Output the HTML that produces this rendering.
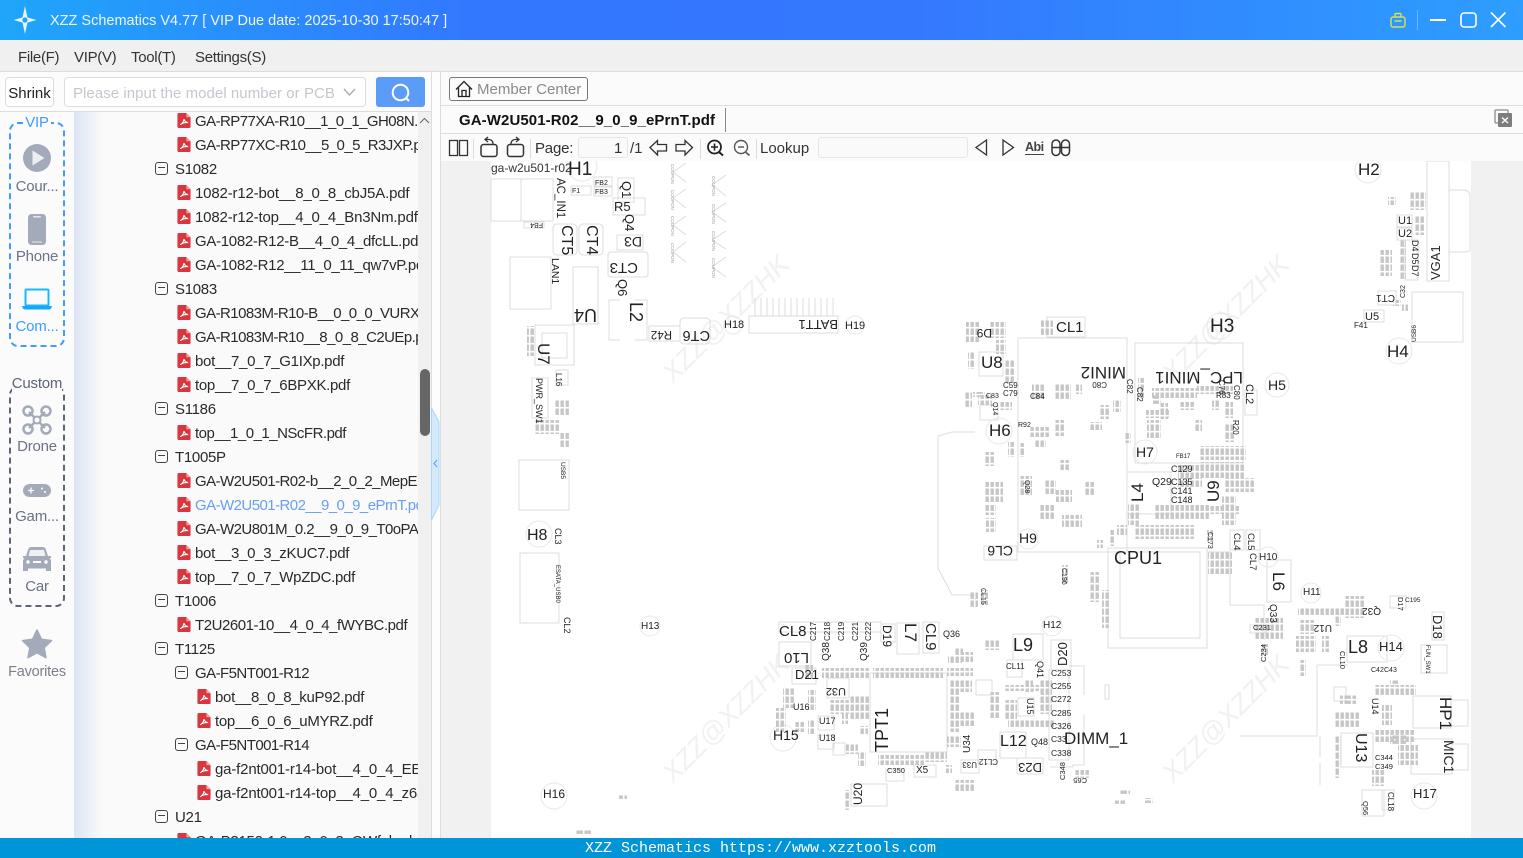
<!DOCTYPE html>
<html><head><meta charset="utf-8"><title>XZZ Schematics</title>
<style>
*{box-sizing:border-box}
html,body{margin:0;padding:0;width:1523px;height:858px;overflow:hidden;background:#f1f1f1;font-family:"Liberation Sans","Noto Sans CJK SC",sans-serif}
.a{position:absolute}
#title{left:0;top:0;width:1523px;height:40px;background:linear-gradient(90deg,#1fa6fa 0,#3376ff 32%,#3478fe 60%,#2d9eff 100%)}
#ttl{left:50px;top:13px;color:#eef5ff;font-size:14.5px;white-space:nowrap}
#menu{left:0;top:40px;width:1523px;height:32px;background:#f0f0f0;border-bottom:1px solid #dcdcdc}
.m{position:absolute;top:9px;font-size:15px;color:#333;white-space:nowrap;letter-spacing:-.3px}
#left{left:0;top:72px;width:431px;height:766px;background:#fafafa}
#srch{left:0;top:72px;width:431px;height:40px;background:#fcfcfc;border-bottom:1px solid #ddd}
.btn{position:absolute;border:1px solid #ddd;border-radius:4px;background:#fff}
#side{left:0;top:112px;width:74px;height:726px;background:#fbfbfb}
#grad{left:74px;top:112px;width:28px;height:726px;background:linear-gradient(90deg,#dce5f4,#fafafa)}
.lb{position:absolute;left:0;width:74px;text-align:center;font-size:15px;color:#6b7384;line-height:18px;margin-top:1px;letter-spacing:-.2px}
.box{position:absolute;left:9px;width:56px;border:2px dashed #3e9cff;border-radius:9px}
#tree{left:74px;top:112px;width:344px;height:726px;overflow:hidden}
.r{position:absolute;height:24px;line-height:24px;font-size:15px;color:#2a2a2a;white-space:nowrap;letter-spacing:-.3px;margin-top:2px}
.c{letter-spacing:-.55px}
.l{letter-spacing:-.17px}
.mn{position:absolute;width:13px;height:13px;border:1.3px solid #444;border-radius:3px}
.mn:after{content:"";position:absolute;left:2px;right:2px;top:4.2px;height:1.3px;background:#444}
#track{left:418px;top:112px;width:13px;height:726px;background:#f0f0f0}
#thumb{left:420px;top:369px;width:9.5px;height:67px;background:#666;border-radius:5px}
#gut{left:431px;top:72px;width:10px;height:766px;background:#fdfdfd;border-left:1px solid #ddd;border-right:1px solid #ddd}
#rt{left:441px;top:72px;width:1082px;height:89px;background:#fbfbfb}
.hl{position:absolute;left:441px;width:1082px;height:1px;background:#ddd}
#mc{left:449px;top:77px;width:139px;height:24px;border:1px solid #777;border-radius:3px;background:#fbfbfb}
.t{position:absolute;font-size:15px;color:#333;white-space:nowrap}
.inp{position:absolute;border:1px solid #e6e6e6;border-radius:3px;background:#fafafa}
.dv{position:absolute;top:139px;width:1px;height:20px;background:#ddd}
#foot{left:0;top:838px;width:1523px;height:20px;background:#0094d9;color:#fff;font-family:"Liberation Mono",monospace;font-size:15px;line-height:22px;padding-left:585px;white-space:nowrap;overflow:hidden}
svg{position:absolute;left:0;top:0;overflow:visible}
#sch text{font-family:"Liberation Sans",sans-serif;fill:#222}
#sch .o{fill:none;stroke:#dcdcdc;stroke-width:1}
#sch .h{fill:none;stroke:#e8e8e8;stroke-width:1}
#sch text.w{fill:#f1f1f1}
#sch text.g{fill:#999;font-size:4.5px}
</style></head><body>

<svg id="sch" width="1523" height="858" viewBox="0 0 1523 858">
<defs>
<pattern id="p" width="5" height="8" patternUnits="userSpaceOnUse"><rect x=".5" y=".5" width="3.4" height="6.4" fill="#c6c6c6"/></pattern>
<pattern id="q" width="8" height="5" patternUnits="userSpaceOnUse"><rect x=".5" y=".5" width="6.4" height="3.4" fill="#c6c6c6"/></pattern>
<filter id="b" x="0" y="0" width="100%" height="100%"><feGaussianBlur stdDeviation=".35"/></filter>
</defs>
<rect x="491" y="161" width="980" height="677" fill="#fff"/>
<!-- watermarks -->
<g font-size="27" font-style="italic">
<text class="w" x="673" y="384" transform="rotate(-45 673 384)">XZZ@XZZHK</text>
<text class="w" x="1173" y="384" transform="rotate(-45 1173 384)">XZZ@XZZHK</text>
<text class="w" x="673" y="784" transform="rotate(-45 673 784)">XZZ@XZZHK</text>
<text class="w" x="1173" y="784" transform="rotate(-45 1173 784)">XZZ@XZZHK</text>
</g>
<!-- outlines -->
<g class="o">
<rect x="491" y="179" width="30" height="42"/><rect x="521" y="179" width="32" height="42"/>
<rect x="553" y="224" width="24" height="31" rx="4"/><rect x="579" y="224" width="24" height="31" rx="4"/>
<rect x="510" y="257" width="41" height="52"/><rect x="573" y="267" width="25" height="57"/>
<path d="M620 300H609V340H620M635 300H647V340H635"/><rect x="608" y="252" width="40" height="25" rx="3"/>
<rect x="680" y="318" width="30" height="26" rx="4"/><rect x="649" y="326" width="31" height="15"/>
<rect x="749" y="316" width="89" height="17"/>
<path d="M755 316V298M761 316V298M767 316V298M773 316V298M779 316V298M785 316V298M791 316V298M797 316V298M803 316V298M809 316V298M815 316V298M821 316V298M827 316V298M833 316V298"/>
<rect x="535" y="325" width="39" height="40"/><rect x="542" y="333" width="25" height="25"/>
<rect x="532" y="378" width="16" height="40"/><rect x="556" y="370" width="12" height="15"/>
<rect x="519" y="460" width="50" height="50"/><rect x="520" y="553" width="39" height="70"/>
<rect x="618" y="178" width="16" height="24"/><rect x="613" y="198" width="32" height="17"/><rect x="617" y="235" width="26" height="15"/>
<rect x="571" y="186" width="20" height="9"/><rect x="594" y="177" width="18" height="9"/><rect x="594" y="187" width="18" height="9"/><rect x="524" y="222" width="20" height="6"/>
<path d="M686 163L673 172L686 182M686 189L673 198L686 208M686 216L673 225L686 235M686 242L673 252L686 262M726 175L712 185L726 196M726 203L712 212L726 222M726 231L712 240L726 249M726 257L712 267L726 277"/>
<rect x="1018" y="338" width="109" height="214"/><rect x="1135" y="343" width="108" height="120"/>
<rect x="1108" y="548" width="99" height="100"/><rect x="1120" y="552" width="80" height="86"/>
<rect x="1047" y="317" width="38" height="20"/><rect x="1127" y="472" width="44" height="42"/>
<rect x="979" y="352" width="24" height="24"/><rect x="980" y="405" width="18" height="15"/>
<path d="M975 432H952L938 436V568L952 595H975"/><path d="M1207 552H1230V605M1230 605H1264V640"/>
<rect x="984" y="546" width="33" height="14"/><rect x="1245" y="390" width="12" height="25"/><rect x="1230" y="530" width="14" height="20"/><rect x="1246" y="530" width="14" height="20"/>
<rect x="1427" y="161" width="22" height="120"/><path d="M1449 190H1462Q1470 190 1470 196V250Q1470 252 1462 252H1449"/>
<rect x="1412" y="292" width="51" height="50"/><rect x="1378" y="291" width="18" height="14"/><rect x="1364" y="310" width="20" height="12"/>
<rect x="1397" y="215" width="15" height="12"/><rect x="1397" y="228" width="15" height="12"/><rect x="1405" y="240" width="13" height="40"/>
<!-- lower left -->
<rect x="779" y="622" width="32" height="10"/><rect x="779" y="642" width="32" height="24"/><rect x="792" y="668" width="24" height="16"/>
<rect x="811" y="622" width="70" height="10"/><rect x="881" y="624" width="14" height="18"/><rect x="897" y="623" width="22" height="31"/><rect x="923" y="622" width="16" height="31"/>
<rect x="827" y="678" width="22" height="20"/><rect x="870" y="673" width="77" height="79"/>
<rect x="818" y="716" width="16" height="14"/><rect x="818" y="735" width="16" height="14"/><rect x="833" y="743" width="12" height="12"/>
<rect x="851" y="784" width="36" height="22"/><rect x="886" y="769" width="18" height="12"/><rect x="914" y="765" width="22" height="12"/>
<rect x="1013" y="634" width="30" height="26"/><rect x="1007" y="660" width="15" height="17"/><rect x="1051" y="640" width="20" height="30"/>
<rect x="1000" y="732" width="26" height="26"/><rect x="1017" y="758" width="26" height="16"/><rect x="978" y="750" width="18" height="14"/><rect x="961" y="760" width="18" height="13"/>
<rect x="1049" y="670" width="20" height="90"/><path d="M1069 666H1084V695M1084 715V765H1073V767M1073 767H1050"/>
<rect x="976" y="680" width="16" height="15"/><rect x="1018" y="698" width="16" height="18"/>
<rect x="1267" y="560" width="24" height="42"/><rect x="1250" y="625" width="16" height="8"/><rect x="1347" y="636" width="40" height="26"/>
<path d="M1317 665H1348M1317 665V736H1240M1320 736V757M1320 763V785"/>
<rect x="1341" y="733" width="32" height="34"/><rect x="1334" y="687" width="12" height="14"/>
<rect x="1413" y="696" width="38" height="32"/><path d="M1451 700H1468V726H1451"/><rect x="1411" y="739" width="41" height="35"/><path d="M1452 744H1468V770H1452"/>
<rect x="1432" y="612" width="12" height="28"/><rect x="1421" y="645" width="26" height="28"/><rect x="1390" y="596" width="16" height="12"/>
<rect x="1362" y="790" width="22" height="26"/><rect x="1382" y="790" width="12" height="20"/>
<rect x="1105" y="685" width="4" height="14"/>
</g>
<!-- coupon marks -->
<g>
<text class="g" x="671" y="164" transform="rotate(90 671 164)">COUPON</text><text class="g" x="671" y="190" transform="rotate(90 671 190)">COUPON</text><text class="g" x="671" y="216" transform="rotate(90 671 216)">COUPON</text><text class="g" x="671" y="243" transform="rotate(90 671 243)">COUPON</text>
<text class="g" x="712" y="176" transform="rotate(90 712 176)">COUPON</text><text class="g" x="712" y="204" transform="rotate(90 712 204)">COUPON</text><text class="g" x="712" y="231" transform="rotate(90 712 231)">COUPON</text><text class="g" x="712" y="258" transform="rotate(90 712 258)">COUPON</text>
</g>
<!-- hole circles -->
<g class="h">
<circle cx="582" cy="166" r="15"/><circle cx="1368" cy="170" r="13"/><circle cx="1220" cy="326" r="13"/><circle cx="1399" cy="351" r="13"/><circle cx="1277" cy="385" r="12"/><circle cx="999" cy="431" r="13"/><circle cx="1145" cy="452" r="12"/><circle cx="539" cy="534" r="13"/><circle cx="1028" cy="539" r="10"/><circle cx="1268" cy="557" r="10"/><circle cx="1311" cy="593" r="10"/><circle cx="1052" cy="626" r="10"/><circle cx="650" cy="626" r="10"/><circle cx="1391" cy="648" r="13"/><circle cx="783" cy="738" r="13"/><circle cx="554" cy="796" r="13"/><circle cx="1424" cy="796" r="13"/><circle cx="733" cy="325" r="9"/><circle cx="855" cy="325" r="9"/>
</g>
<!-- part clusters -->
<g fill="url(#p)" filter="url(#b)">
<rect x="966" y="322" width="13" height="20"/><rect x="990" y="322" width="16" height="16"/><rect x="996" y="340" width="10" height="14"/><rect x="968" y="351" width="6" height="18"/><rect x="1005" y="360" width="10" height="24"/><rect x="1041" y="320" width="12" height="16"/>
<rect x="965" y="392" width="7" height="16"/><rect x="978" y="395" width="14" height="10"/><rect x="1000" y="402" width="12" height="8"/><rect x="1032" y="384" width="12" height="16"/><rect x="1055" y="384" width="16" height="16"/><rect x="1076" y="384" width="6" height="10"/>
<rect x="1029" y="427" width="20" height="10"/><rect x="1054" y="420" width="10" height="16"/><rect x="1034" y="440" width="12" height="8"/><rect x="1020" y="443" width="5" height="14"/><rect x="984" y="452" width="10" height="14"/><rect x="1008" y="442" width="7" height="15"/>
<rect x="985" y="482" width="18" height="20"/><rect x="984" y="505" width="12" height="10"/><rect x="986" y="518" width="10" height="14"/><rect x="1044" y="480" width="12" height="14"/><rect x="1020" y="476" width="12" height="20"/><rect x="1056" y="490" width="16" height="12"/><rect x="1060" y="460" width="10" height="10"/><rect x="1084" y="482" width="10" height="14"/><rect x="1040" y="505" width="14" height="14"/><rect x="1062" y="515" width="20" height="12"/><rect x="1110" y="530" width="5" height="16"/>
<rect x="1100" y="405" width="10" height="14"/><rect x="1113" y="400" width="8" height="12"/><rect x="1090" y="422" width="12" height="8"/><rect x="1125" y="433" width="6" height="10"/><rect x="1138" y="378" width="6" height="20"/><rect x="1152" y="388" width="45" height="10"/><rect x="1197" y="386" width="36" height="8"/><rect x="1146" y="410" width="24" height="8"/><rect x="1160" y="403" width="8" height="16"/><rect x="1180" y="402" width="14" height="8"/><rect x="1194" y="420" width="8" height="12"/><rect x="1212" y="400" width="8" height="10"/><rect x="1225" y="402" width="8" height="16"/><rect x="1225" y="424" width="10" height="18"/><rect x="1147" y="420" width="14" height="18"/>
<rect x="1200" y="446" width="46" height="14"/><rect x="1200" y="462" width="44" height="16"/><rect x="1178" y="465" width="24" height="22"/><rect x="1225" y="478" width="30" height="14"/><rect x="1210" y="506" width="30" height="8"/><rect x="1155" y="505" width="55" height="14"/><rect x="1222" y="495" width="14" height="30"/>
<rect x="1128" y="503" width="12" height="22"/><rect x="1135" y="525" width="60" height="14"/><rect x="1097" y="540" width="6" height="8"/><rect x="1117" y="525" width="10" height="10"/><rect x="1207" y="530" width="6" height="12"/><rect x="1208" y="552" width="24" height="22"/>
<rect x="1090" y="572" width="10" height="30"/><rect x="1102" y="590" width="8" height="38"/><rect x="1062" y="565" width="6" height="18"/><rect x="970" y="592" width="8" height="16"/><rect x="982" y="590" width="6" height="15"/>
<rect x="1255" y="618" width="28" height="22"/><rect x="1262" y="644" width="6" height="12"/><rect x="1298" y="608" width="50" height="8"/><rect x="1300" y="620" width="14" height="14"/><rect x="1335" y="610" width="6" height="16"/><rect x="1345" y="596" width="20" height="22"/>
<rect x="1296" y="636" width="20" height="16"/><rect x="1322" y="636" width="8" height="16"/><rect x="1300" y="660" width="6" height="16"/>
<rect x="1334" y="712" width="26" height="16"/><rect x="1335" y="735" width="6" height="30"/><rect x="1334" y="764" width="6" height="14"/><rect x="1374" y="685" width="42" height="10"/><rect x="1382" y="705" width="10" height="20"/><rect x="1374" y="730" width="40" height="12"/><rect x="1398" y="745" width="20" height="20"/><rect x="1372" y="770" width="12" height="16"/>
<rect x="1380" y="250" width="12" height="26"/><rect x="1388" y="197" width="8" height="8"/><rect x="1410" y="192" width="16" height="18"/><rect x="1415" y="215" width="10" height="20"/><rect x="1400" y="240" width="6" height="40"/><rect x="1393" y="300" width="8" height="6"/><rect x="1402" y="304" width="6" height="8"/>
<rect x="527" y="326" width="8" height="30"/><rect x="555" y="400" width="14" height="16"/><rect x="535" y="420" width="25" height="14"/><rect x="559" y="433" width="10" height="14"/>
<rect x="805" y="665" width="8" height="14"/><rect x="822" y="668" width="48" height="10"/><rect x="873" y="668" width="70" height="10"/><rect x="947" y="668" width="26" height="8"/><rect x="950" y="680" width="10" height="52"/><rect x="960" y="680" width="12" height="12"/><rect x="849" y="695" width="20" height="24"/><rect x="830" y="700" width="20" height="14"/><rect x="783" y="688" width="12" height="20"/><rect x="808" y="690" width="8" height="20"/>
<rect x="776" y="708" width="10" height="24"/><rect x="795" y="722" width="10" height="10"/><rect x="808" y="720" width="6" height="14"/><rect x="842" y="714" width="6" height="10"/><rect x="860" y="726" width="8" height="8"/><rect x="846" y="744" width="12" height="10"/><rect x="858" y="752" width="8" height="14"/><rect x="878" y="755" width="46" height="10"/><rect x="925" y="752" width="22" height="10"/><rect x="947" y="735" width="14" height="12"/><rect x="946" y="765" width="6" height="8"/><rect x="955" y="780" width="20" height="12"/><rect x="845" y="790" width="5" height="20"/>
<rect x="958" y="712" width="16" height="14"/><rect x="1005" y="685" width="45" height="6"/><rect x="1005" y="700" width="12" height="20"/><rect x="1008" y="720" width="46" height="8"/><rect x="1040" y="680" width="12" height="34"/><rect x="1025" y="680" width="8" height="12"/><rect x="990" y="692" width="10" height="26"/><rect x="1075" y="770" width="14" height="8"/><rect x="955" y="648" width="8" height="10"/><rect x="961" y="652" width="12" height="10"/><rect x="985" y="640" width="14" height="10"/><rect x="948" y="655" width="14" height="8"/>
</g>
<g fill="url(#q)" filter="url(#b)">
<rect x="973" y="392" width="12" height="5"/><rect x="1153" y="395" width="8" height="10"/>
<rect x="1340" y="695" width="16" height="10"/><rect x="1390" y="735" width="16" height="10"/><rect x="1390" y="680" width="8" height="6"/>
<rect x="1120" y="790" width="10" height="5"/><rect x="1115" y="800" width="10" height="5"/><rect x="1145" y="798" width="8" height="5"/><rect x="576" y="830" width="16" height="5"/><rect x="619" y="795" width="8" height="5"/>
</g>
<!-- labels -->
<text x="491" y="172" font-size="12" style="fill:#333">ga-w2u501-r02</text>
<text x="568" y="175" font-size="19">H1</text>
<text x="557" y="178" transform="rotate(90 557 178)" font-size="11.5">AC_IN1</text>
<text x="572" y="193" font-size="7">F1</text><text x="595" y="185" font-size="7">FB2</text><text x="595" y="194" font-size="7">FB3</text>
<text x="543" y="223" transform="rotate(180 543 223)" font-size="7">FB4</text>
<text x="622" y="181" transform="rotate(90 622 181)" font-size="13">Q1</text>
<text x="614" y="211" font-size="13">R5</text>
<text x="625" y="214" transform="rotate(90 625 214)" font-size="13">Q4</text>
<text x="642" y="237" transform="rotate(180 642 237)" font-size="14">D3</text>
<text x="562" y="225" transform="rotate(90 562 225)" font-size="16">CT5</text>
<text x="587" y="225" transform="rotate(90 587 225)" font-size="16">CT4</text>
<text x="638" y="263" transform="rotate(180 638 263)" font-size="15">CT3</text>
<text x="618" y="279" transform="rotate(90 618 279)" font-size="13">Q6</text>
<text x="552" y="258" transform="rotate(90 552 258)" font-size="10.5">LAN1</text>
<text x="597" y="309" transform="rotate(180 597 309)" font-size="18">U4</text>
<text x="630" y="302" transform="rotate(90 630 302)" font-size="18">L2</text>
<text x="710" y="331" transform="rotate(180 710 331)" font-size="14.5">CT6</text>
<text x="672" y="331" transform="rotate(180 672 331)" font-size="11.5">R42</text>
<text x="724" y="328" font-size="11">H18</text>
<text x="838" y="320" transform="rotate(180 838 320)" font-size="13">BATT1</text>
<text x="845" y="329" font-size="11">H19</text>
<text x="538" y="343" transform="rotate(90 538 343)" font-size="17">U7</text>
<text x="536" y="378" transform="rotate(90 536 378)" font-size="9">PWR_SW1</text>
<text x="556" y="373" transform="rotate(90 556 373)" font-size="8">L16</text>
<text x="561" y="462" transform="rotate(90 561 462)" font-size="6.5">USB5</text>
<text x="527" y="540" font-size="16">H8</text>
<text x="555" y="528" transform="rotate(90 555 528)" font-size="9">CL3</text>
<text x="556" y="565" transform="rotate(90 556 565)" font-size="6">ESATA_USB0</text>
<text x="564" y="617" transform="rotate(90 564 617)" font-size="9">CL2</text>
<text x="641" y="629" font-size="10">H13</text>
<text x="543" y="798" font-size="12">H16</text>
<text x="992" y="329" transform="rotate(180 992 329)" font-size="12">D9</text>
<text x="1056" y="332" font-size="15">CL1</text>
<text x="1126" y="367" transform="rotate(180 1126 367)" font-size="17">MINI2</text>
<text x="1210" y="332" font-size="19">H3</text>
<text x="1243" y="372" transform="rotate(180 1243 372)" font-size="17">LPC_MINI1</text>
<text x="1246" y="384" transform="rotate(90 1246 384)" font-size="11">CL2</text>
<text x="981" y="368" font-size="17">U8</text>
<text x="989" y="436" font-size="17">H6</text>
<text x="1268" y="390" font-size="14">H5</text>
<text x="1136" y="457" font-size="14">H7</text>
<text x="1143" y="502" transform="rotate(-90 1143 502)" font-size="17">L4</text>
<text x="1219" y="502" transform="rotate(-90 1219 502)" font-size="17">U9</text>
<text x="1152" y="485" font-size="10.5">Q29</text>
<g font-size="9"><text x="1171" y="472">C129</text><text x="1171" y="485">C135</text><text x="1171" y="494">C141</text><text x="1171" y="503">C148</text></g>
<text x="1019" y="543" font-size="14">H9</text>
<text x="1013" y="546" transform="rotate(180 1013 546)" font-size="14">CL6</text>
<text x="1114" y="564" font-size="18">CPU1</text>
<text x="1259" y="560" font-size="10">H10</text>
<g font-size="9.5"><text x="1234" y="533" transform="rotate(90 1234 533)">CL4</text><text x="1248" y="533" transform="rotate(90 1248 533)">CL5</text><text x="1250" y="553" transform="rotate(90 1250 553)">CL7</text></g>
<g font-size="8"><text x="1003" y="388">C59</text><text x="1003" y="396">C79</text><text x="1030" y="399">C84</text><text x="1107" y="382" transform="rotate(180 1107 382)">C80</text><text x="1127" y="379" transform="rotate(90 1127 379)">C82</text><text x="1137" y="387" transform="rotate(90 1137 387)">C82</text><text x="1219" y="380" transform="rotate(90 1219 380)">C76</text><text x="1234" y="385" transform="rotate(90 1234 385)">C80</text><text x="1216" y="398">R83</text><text x="1233" y="420" transform="rotate(90 1233 420)">R20</text></g>
<text x="986" y="398" font-size="7">C83</text><text x="1018" y="427" font-size="7">R92</text><text x="1025" y="480" transform="rotate(90 1025 480)" font-size="7">Q28</text><text x="993" y="402" transform="rotate(90 993 402)" font-size="7">Q14</text>
<text x="1176" y="458" font-size="6">FB17</text>
<text x="1062" y="568" transform="rotate(90 1062 568)" font-size="7">C196</text><text x="981" y="588" transform="rotate(90 981 588)" font-size="7">CL15</text><text x="1208" y="532" transform="rotate(90 1208 532)" font-size="7">C173</text>
<text x="779" y="636" font-size="15">CL8</text>
<g font-size="8"><text x="816" y="641" transform="rotate(-90 816 641)">C217</text><text x="830" y="641" transform="rotate(-90 830 641)">C218</text><text x="844" y="641" transform="rotate(-90 844 641)">C219</text><text x="858" y="641" transform="rotate(-90 858 641)">C221</text><text x="871" y="641" transform="rotate(-90 871 641)">C222</text></g>
<text x="883" y="625" transform="rotate(90 883 625)" font-size="12">D19</text>
<text x="905" y="623" transform="rotate(90 905 623)" font-size="17">L7</text>
<text x="926" y="623" transform="rotate(90 926 623)" font-size="15">CL9</text>
<text x="943" y="637" font-size="9">Q36</text>
<text x="1043" y="628" font-size="10">H12</text>
<text x="1013" y="651" font-size="18">L9</text>
<text x="1067" y="666" transform="rotate(-90 1067 666)" font-size="13">D20</text>
<text x="809" y="653" transform="rotate(180 809 653)" font-size="15">L10</text>
<text x="795" y="679" font-size="13">D21</text>
<text x="829" y="661" transform="rotate(-90 829 661)" font-size="10">Q38</text>
<text x="867" y="661" transform="rotate(-90 867 661)" font-size="10">Q39</text>
<text x="846" y="688" transform="rotate(180 846 688)" font-size="11">U32</text>
<text x="793" y="710" font-size="9">U16</text><text x="819" y="724" font-size="9">U17</text><text x="819" y="741" font-size="9">U18</text>
<text x="773" y="740" font-size="14">H15</text>
<text x="888" y="752" transform="rotate(-90 888 752)" font-size="18">TPT1</text>
<text x="887" y="773" font-size="7.5">C350</text><text x="916" y="773" font-size="10">X5</text>
<text x="862" y="805" transform="rotate(-90 862 805)" font-size="12">U20</text>
<text x="970" y="753" transform="rotate(-90 970 753)" font-size="10">U34</text>
<text x="977" y="762" transform="rotate(180 977 762)" font-size="8">U33</text>
<text x="998" y="759" transform="rotate(180 998 759)" font-size="8">CL12</text>
<text x="1000" y="746" font-size="16">L12</text>
<text x="1031" y="745" font-size="9">Q48</text>
<text x="1064" y="744" font-size="17">DIMM_1</text>
<text x="1042" y="763" transform="rotate(180 1042 763)" font-size="13">D23</text>
<g font-size="8.5"><text x="1051" y="676">C253</text><text x="1051" y="689">C255</text><text x="1051" y="702">C272</text><text x="1051" y="716">C285</text><text x="1051" y="729">C326</text><text x="1051" y="742">C33</text><text x="1051" y="756">C338</text></g>
<text x="1065" y="780" transform="rotate(-90 1065 780)" font-size="7.5">C348</text>
<text x="1087" y="778" transform="rotate(180 1087 778)" font-size="7.5">C65</text>
<text x="1027" y="698" transform="rotate(90 1027 698)" font-size="9">U15</text>
<text x="1037" y="661" transform="rotate(90 1037 661)" font-size="9">Q41</text>
<text x="1006" y="669" font-size="8">CL11</text>
<text x="1358" y="175" font-size="17">H2</text>
<text x="1387" y="357" font-size="17">H4</text>
<text x="1398" y="224" font-size="11">U1</text><text x="1398" y="237" font-size="11">U2</text>
<text x="1440" y="280" transform="rotate(-90 1440 280)" font-size="13">VGA1</text>
<g font-size="9"><text x="1412" y="240" transform="rotate(90 1412 240)">D4</text><text x="1412" y="253" transform="rotate(90 1412 253)">D5</text><text x="1412" y="265" transform="rotate(90 1412 265)">D7</text></g>
<text x="1365" y="320" font-size="11">U5</text>
<text x="1395" y="295" transform="rotate(180 1395 295)" font-size="10">CT1</text>
<text x="1354" y="328" font-size="8">F41</text>
<text x="1416" y="342" transform="rotate(-90 1416 342)" font-size="6.5">USB6</text>
<text x="1405" y="298" transform="rotate(-90 1405 298)" font-size="7">C32</text>
<text x="1303" y="595" font-size="10">H11</text>
<text x="1270" y="604" transform="rotate(90 1270 604)" font-size="10">Q33</text>
<text x="1273" y="572" transform="rotate(90 1273 572)" font-size="17">L6</text>
<text x="1332" y="625" transform="rotate(180 1332 625)" font-size="10">U12</text>
<text x="1381" y="608" transform="rotate(180 1381 608)" font-size="10">Q32</text>
<text x="1398" y="597" transform="rotate(90 1398 597)" font-size="7.5">D17</text>
<text x="1433" y="615" transform="rotate(90 1433 615)" font-size="13">D18</text>
<text x="1405" y="602" font-size="6.5">C195</text>
<text x="1348" y="653" font-size="18">L8</text>
<text x="1379" y="651" font-size="13">H14</text>
<text x="1440" y="697" transform="rotate(90 1440 697)" font-size="17">HP1</text>
<text x="1444" y="740" transform="rotate(90 1444 740)" font-size="14">MIC1</text>
<text x="1356" y="733" transform="rotate(90 1356 733)" font-size="16">U13</text>
<text x="1372" y="698" transform="rotate(90 1372 698)" font-size="9">U14</text>
<text x="1413" y="798" font-size="13">H17</text>
<text x="1340" y="651" transform="rotate(90 1340 651)" font-size="7.5">CL10</text>
<text x="1388" y="792" transform="rotate(90 1388 792)" font-size="8">CL18</text>
<text x="1253" y="630" font-size="7.5">C231</text>
<text x="1266" y="662" transform="rotate(-90 1266 662)" font-size="7.5">C234</text>
<text x="1375" y="760" font-size="7.5">C344</text><text x="1375" y="769" font-size="7.5">C349</text>
<text x="1371" y="672" font-size="7">C42</text><text x="1384" y="672" font-size="7">C43</text>
<text x="1363" y="801" transform="rotate(90 1363 801)" font-size="7.5">Q56</text>
<text x="1426" y="645" transform="rotate(90 1426 645)" font-size="6">FUN_SW1</text>
</svg>

<!-- title bar -->
<div class="a" id="title"></div>
<div class="a" id="ttl">XZZ Schematics V4.77 [ VIP Due date: 2025-10-30 17:50:47 ]</div>
<svg width="1523" height="40" viewBox="0 0 1523 40">
<path d="M25 6L27.5 17.5L36.5 20L27.5 22.5L25 34L22.5 22.5L13.5 20L22.5 17.5Z" fill="#eaf4ff"/>
<circle cx="25" cy="20" r="2.6" fill="#2aa0fb"/>
<rect x="1391" y="17" width="14" height="10" rx="2" fill="none" stroke="#d8e24a" stroke-width="1.4"/>
<path d="M1395 17V14.5Q1395 13.5 1396 13.5H1400Q1401 13.5 1401 14.5V17M1394.5 21H1401.5" fill="none" stroke="#d8e24a" stroke-width="1.4"/>
<rect x="1417" y="10" width="1" height="20" fill="#fff" opacity=".3"/>
<rect x="1430" y="19" width="16" height="2" fill="#fff"/>
<rect x="1461" y="13" width="15" height="14" rx="3" fill="none" stroke="#fff" stroke-width="1.6"/>
<path d="M1491 12.5L1505.5 27M1505.5 12.5L1491 27" stroke="#fff" stroke-width="1.6" fill="none"/>
</svg>

<!-- menu -->
<div class="a" id="menu">
<span class="m" style="left:18px">File(F)</span><span class="m" style="left:74px">VIP(V)</span><span class="m" style="left:131px">Tool(T)</span><span class="m" style="left:195px">Settings(S)</span>
</div>

<!-- left panel -->
<div class="a" id="left"></div>
<div class="a" id="srch">
<div class="btn" style="left:5px;top:5px;width:49px;height:30px;font-size:15px;line-height:31px;text-align:center;color:#222">Shrink</div>
<div class="btn" style="left:64px;top:5px;width:302px;height:30px;font-size:15px;line-height:31px;color:#c4c7ce;padding-left:8px;letter-spacing:.05px">Please input the model number or PCB</div>
<svg width="431" height="40" viewBox="0 0 431 40"><path d="M344 17L349.5 23L355 17" fill="none" stroke="#aaa" stroke-width="1.3"/></svg>
<div class="a" style="left:376px;top:5px;width:49px;height:30px;background:#5a9cf8;border-radius:3px"></div>
<svg width="431" height="40" viewBox="0 0 431 40"><circle cx="400.5" cy="20.5" r="7.8" fill="none" stroke="#fff" stroke-width="2"/><path d="M406 26L409 29" stroke="#fff" stroke-width="2"/></svg>
</div>

<div class="a" id="side"></div>
<div class="a" id="grad"></div>

<div class="box" style="top:122px;height:225px"></div>
<div class="lb" style="top:113px;color:#3e9cff"><span style="background:#fbfbfb;padding:0 2px">VIP</span></div>
<div class="lb" style="top:177px">Cour...</div>
<div class="lb" style="top:247px">Phone</div>
<div class="lb" style="top:317px;color:#3e9cff">Com...</div>
<div class="box" style="top:386px;height:221px;border-color:#5c6475"></div>
<div class="lb" style="top:374px;color:#5c6475"><span style="background:#fbfbfb">Custom</span></div>
<div class="lb" style="top:437px">Drone</div>
<div class="lb" style="top:507px">Gam...</div>
<div class="lb" style="top:577px">Car</div>
<div class="lb" style="top:662px;color:#7b7f88;font-size:14.5px">Favorites</div>

<svg width="74" height="700" viewBox="0 0 74 700">
<circle cx="37" cy="158" r="14" fill="#a3aaba"/><path d="M32.5 150.5L44.5 158L32.5 165.5Z" fill="#eceef2"/>
<rect x="28" y="214" width="18" height="31" rx="3.5" fill="#a3aaba"/><rect x="33" y="216" width="8" height="1.5" rx=".7" fill="#e6e8ee"/><rect x="32" y="241.5" width="10" height="1" fill="#e6e8ee"/>
<rect x="25.5" y="289.5" width="23" height="16" rx="1" fill="none" stroke="#10bdfc" stroke-width="2"/><path d="M22 306H52L51 308.5Q50.5 309.5 49 309.5H25Q23.5 309.5 23 308.5Z" fill="#1aa4fc"/>
<g fill="none" stroke="#a3aaba" stroke-width="2.5"><path d="M29 412L45 428M45 412L29 428"/><circle cx="28" cy="411" r="4.5"/><circle cx="46" cy="411" r="4.5"/><circle cx="28" cy="429" r="4.5"/><circle cx="46" cy="429" r="4.5"/></g><circle cx="37" cy="420" r="3.5" fill="#fbfbfb" stroke="#a3aaba" stroke-width="2"/>
<rect x="23" y="484" width="28" height="13" rx="6.5" fill="#a3aaba"/><path d="M28 490.5h6M31 487.5v6" stroke="#fff" stroke-width="1.3"/><circle cx="42" cy="488.5" r="1" fill="#fff"/><circle cx="45" cy="492" r="1" fill="#fff"/>
<path d="M28.5 548.5Q29.5 547 31 547H43Q44.5 547 45.5 548.5L48 556H50.5Q51 556 51 557V558H49.5Q51 559.5 51 561V571H46V568.5H28V571H23V561Q23 559.5 24.5 558H23V557Q23 556 23.5 556H26Z" fill="#a3aaba"/><path d="M30 550H44L45.5 556H28.5Z" fill="#eef0f4"/><circle cx="28" cy="562" r="1.7" fill="#fff"/><circle cx="46" cy="562" r="1.7" fill="#fff"/><rect x="33" y="561" width="8" height="2" fill="#fff"/>
<path d="M37 630L41.5 639.3L51.5 640.6L44.2 647.7L46 657.7L37 652.8L28 657.7L29.8 647.7L22.5 640.6L32.5 639.3Z" fill="#a3aaba" stroke="#a3aaba" stroke-width="1.5" stroke-linejoin="round"/>
</svg>

<!-- tree -->
<svg width="0" height="0" style="position:absolute"><defs>
<symbol id="pd" viewBox="0 0 14 16"><path d="M1.5 0H9.5L14 4.5V14.5Q14 16 12.5 16H1.5Q0 16 0 14.5V1.5Q0 0 1.5 0Z" fill="#d9363e"/><path d="M9.5 0V4.5H14Z" fill="#f0a0a4"/><path d="M3 12.5C5 11.5 6.5 9 7 6.5C7.5 9 9 10 11.5 10.3C9 10 5.5 10.5 3 12.5Z" fill="none" stroke="#fff" stroke-width="1.1"/></symbol>
</defs></svg>
<div class="a" id="tree">
<svg width="344" height="760" viewBox="0 0 344 760" style="left:0;top:0">
<g>
<use href="#pd" x="103" y="1" width="14" height="15"/><use href="#pd" x="103" y="25" width="14" height="15"/>
<use href="#pd" x="103" y="73" width="14" height="15"/><use href="#pd" x="103" y="97" width="14" height="15"/><use href="#pd" x="103" y="121" width="14" height="15"/><use href="#pd" x="103" y="145" width="14" height="15"/>
<use href="#pd" x="103" y="193" width="14" height="15"/><use href="#pd" x="103" y="217" width="14" height="15"/><use href="#pd" x="103" y="241" width="14" height="15"/><use href="#pd" x="103" y="265" width="14" height="15"/>
<use href="#pd" x="103" y="313" width="14" height="15"/>
<use href="#pd" x="103" y="361" width="14" height="15"/><use href="#pd" x="103" y="385" width="14" height="15"/><use href="#pd" x="103" y="409" width="14" height="15"/><use href="#pd" x="103" y="433" width="14" height="15"/><use href="#pd" x="103" y="457" width="14" height="15"/>
<use href="#pd" x="103" y="505" width="14" height="15"/>
<use href="#pd" x="123" y="577" width="14" height="15"/><use href="#pd" x="123" y="601" width="14" height="15"/>
<use href="#pd" x="123" y="649" width="14" height="15"/><use href="#pd" x="123" y="673" width="14" height="15"/>
<use href="#pd" x="103" y="721" width="14" height="15"/>
</g>
</svg>
<div class="r c" style="left:121px;top:-4px">GA-RP77XA-R10__1_0_1_GH08N.pdf</div>
<div class="r c" style="left:121px;top:20px">GA-RP77XC-R10__5_0_5_R3JXP.pdf</div>
<div class="mn" style="left:81px;top:50px"></div><div class="r" style="left:101px;top:44px">S1082</div>
<div class="r l" style="left:121px;top:68px">1082-r12-bot__8_0_8_cbJ5A.pdf</div>
<div class="r l" style="left:121px;top:92px">1082-r12-top__4_0_4_Bn3Nm.pdf</div>
<div class="r" style="left:121px;top:116px">GA-1082-R12-B__4_0_4_dfcLL.pdf</div>
<div class="r" style="left:121px;top:140px">GA-1082-R12__11_0_11_qw7vP.pdf</div>
<div class="mn" style="left:81px;top:170px"></div><div class="r" style="left:101px;top:164px">S1083</div>
<div class="r c" style="left:121px;top:188px">GA-R1083M-R10-B__0_0_0_VURXj.pdf</div>
<div class="r c" style="left:121px;top:212px">GA-R1083M-R10__8_0_8_C2UEp.pdf</div>
<div class="r" style="left:121px;top:236px">bot__7_0_7_G1IXp.pdf</div>
<div class="r" style="left:121px;top:260px">top__7_0_7_6BPXK.pdf</div>
<div class="mn" style="left:81px;top:290px"></div><div class="r" style="left:101px;top:284px">S1186</div>
<div class="r" style="left:121px;top:308px;letter-spacing:-.5px">top__1_0_1_NScFR.pdf</div>
<div class="mn" style="left:81px;top:338px"></div><div class="r" style="left:101px;top:332px">T1005P</div>
<div class="r c" style="left:121px;top:356px">GA-W2U501-R02-b__2_0_2_MepEr.pdf</div>
<div class="r c" style="left:121px;top:380px;color:#6a9ef0">GA-W2U501-R02__9_0_9_ePrnT.pdf</div>
<div class="r c" style="left:121px;top:404px">GA-W2U801M_0.2__9_0_9_T0oPA.pdf</div>
<div class="r" style="left:121px;top:428px">bot__3_0_3_zKUC7.pdf</div>
<div class="r" style="left:121px;top:452px">top__7_0_7_WpZDC.pdf</div>
<div class="mn" style="left:81px;top:482px"></div><div class="r" style="left:101px;top:476px">T1006</div>
<div class="r" style="left:121px;top:500px;letter-spacing:-.45px">T2U2601-10__4_0_4_fWYBC.pdf</div>
<div class="mn" style="left:81px;top:530px"></div><div class="r" style="left:101px;top:524px">T1125</div>
<div class="mn" style="left:101px;top:554px"></div><div class="r c" style="left:121px;top:548px">GA-F5NT001-R12</div>
<div class="r" style="left:141px;top:572px">bot__8_0_8_kuP92.pdf</div>
<div class="r" style="left:141px;top:596px">top__6_0_6_uMYRZ.pdf</div>
<div class="mn" style="left:101px;top:626px"></div><div class="r c" style="left:121px;top:620px">GA-F5NT001-R14</div>
<div class="r l" style="left:141px;top:644px">ga-f2nt001-r14-bot__4_0_4_EEabc.pdf</div>
<div class="r l" style="left:141px;top:668px">ga-f2nt001-r14-top__4_0_4_z6abc.pdf</div>
<div class="mn" style="left:81px;top:698px"></div><div class="r" style="left:101px;top:692px">U21</div>
<div class="r" style="left:121px;top:716px">GA-B3152-1.0__3_0_3_QWfabcd.pdf</div>
</div>
<div class="a" id="track"></div>
<svg width="431" height="130" viewBox="0 0 431 130"><path d="M420 123L424.5 118.5L429 123" fill="none" stroke="#666" stroke-width="1"/></svg>
<div class="a" id="thumb"></div>
<div class="a" id="gut"></div>
<svg width="441" height="530" viewBox="0 0 441 530"><path d="M431.5 408L439 422V505L431.5 520Z" fill="#d5e9fd" stroke="#aad5fb" stroke-width="1"/><path d="M437 460L434 463.5L437 467" fill="none" stroke="#5aa5f5" stroke-width="1.2"/></svg>

<!-- right top -->
<div class="a" id="rt"></div>
<div class="hl" style="top:105px"></div><div class="hl" style="top:133px"></div><div class="hl" style="top:71px"></div>
<div class="a" id="mc"></div>
<div class="t" style="left:477px;top:81px;color:#8a8a8a">Member Center</div>
<div class="t" style="left:459px;top:112px;color:#111;font-weight:bold;font-size:15px;letter-spacing:.09px">GA-W2U501-R02__9_0_9_ePrnT.pdf</div>
<div class="a" style="left:725px;top:108px;width:1px;height:24px;background:#888"></div>
<div class="dv" style="left:473px"></div><div class="dv" style="left:530px"></div><div class="dv" style="left:700px"></div><div class="dv" style="left:756px"></div>
<div class="t" style="left:535px;top:140px;letter-spacing:-.2px">Page:</div>
<div class="inp" style="left:578px;top:137px;width:50px;height:21px"></div>
<div class="t" style="left:614px;top:140px">1</div>
<div class="t" style="left:630px;top:140px">/1</div>
<div class="t" style="left:760px;top:140px">Lookup</div>
<div class="inp" style="left:818px;top:137px;width:150px;height:21px"></div>
<div class="t" style="left:1025px;top:141px;font-size:12.5px;font-weight:bold;color:#444;letter-spacing:-.5px;border-bottom:1.5px solid #444;line-height:13px">Abi</div>
<svg width="1523" height="161" viewBox="0 0 1523 161">
<path d="M456 89.5L464 81.5L472 89.5M458.5 87.5V96.5H469.5V87.5M462 96.5V90.5H466V96.5" fill="none" stroke="#222" stroke-width="1.3"/>
<g fill="none" stroke="#333" stroke-width="1.3">
<rect x="449.5" y="140.5" width="8" height="15"/><rect x="459.5" y="140.5" width="8" height="15"/>
<rect x="481" y="144.5" width="16" height="12" rx="2.5" stroke-width="1.5"/><path d="M493 144C493 140 490 139 485.5 139.5M488 137L485 139.5L488 142"/>
<rect x="507.5" y="144.5" width="16" height="12" rx="2.5" stroke-width="1.5"/><path d="M511 144C511 140 514 139 518.5 139.5M516 137L519 139.5L516 142"/>
<path d="M650 147.5L657.5 140.5V144.5H666.5V151H657.5V155Z"/><path d="M692.5 147.5L685 140.5V144.5H676V151H685V155Z"/>
<path d="M986.5 140L976 147.5L986.5 155Z"/><path d="M1003 140L1013.5 147.5L1003 155Z"/>
<rect x="1052" y="140" width="8" height="15.5" rx="4" stroke-width="1.5"/><rect x="1061.5" y="140" width="8" height="15.5" rx="4" stroke-width="1.5"/><path d="M1052 147.5H1069.5" stroke-width="1.5"/>
</g>
<circle cx="714.5" cy="147" r="6.5" fill="none" stroke="#222" stroke-width="1.8"/><path d="M719 152L723 155.5" stroke="#222" stroke-width="2"/><path d="M711 147H718M714.5 143.5V150.5" stroke="#222" stroke-width="1.6"/>
<circle cx="741" cy="147" r="6.5" fill="none" stroke="#555" stroke-width="1.4"/><path d="M745.5 152L749.5 155.5" stroke="#555" stroke-width="1.6"/><path d="M738 147H744" stroke="#555" stroke-width="1.4"/>
<rect x="1495" y="110" width="13" height="13" rx="1" fill="none" stroke="#8a8a8a" stroke-width="1.3"/><rect x="1498" y="113" width="14" height="14" rx="1" fill="#7d7d7d"/><path d="M1502 117.5L1508 123M1508 117.5L1502 123" stroke="#fff" stroke-width="1.3"/>
</svg>

<div class="a" id="foot">XZZ Schematics https://www.xzztools.com</div>
</body></html>
